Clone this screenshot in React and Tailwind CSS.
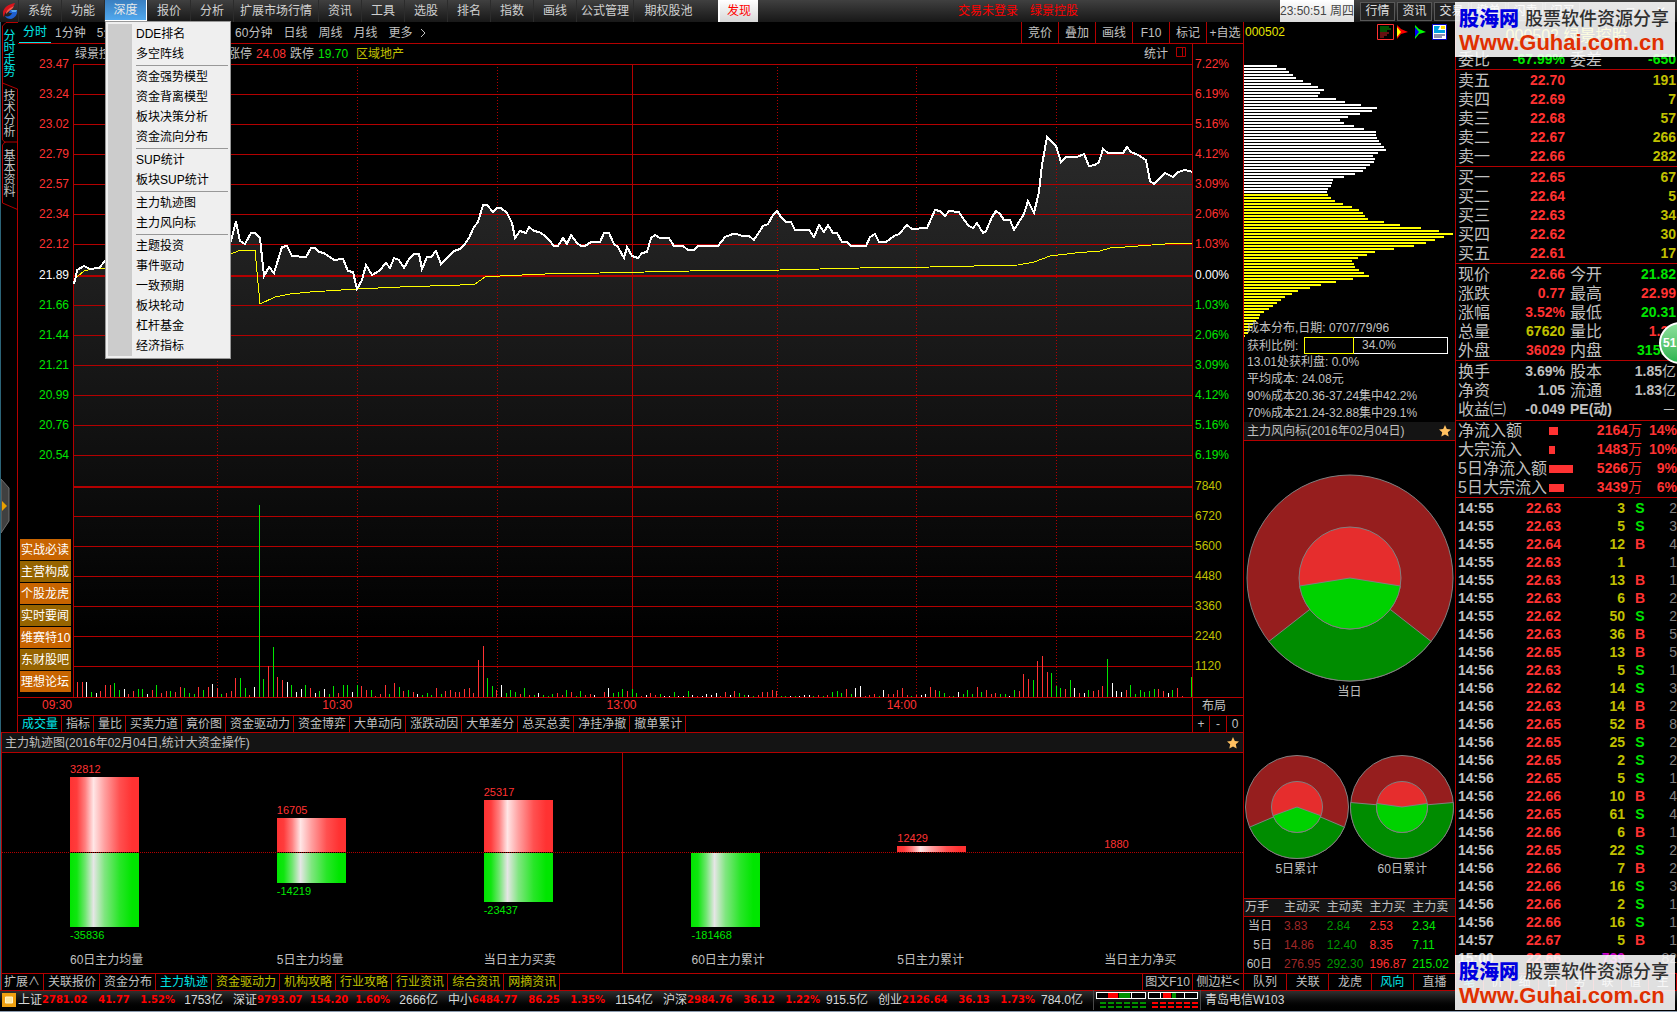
import { useState } from 'react'
import clsx from 'clsx'

const MENU = [
  ['系统', 'w-[43px]'],
  ['功能', 'w-[43px]'],
  ['深度', 'w-[43px]'],
  ['报价', 'w-[43px]'],
  ['分析', 'w-[43px]'],
  ['扩展市场行情', 'w-[85px]'],
  ['资讯', 'w-[43px]'],
  ['工具', 'w-[43px]'],
  ['选股', 'w-[43px]'],
  ['排名', 'w-[43px]'],
  ['指数', 'w-[43px]'],
  ['画线', 'w-[43px]'],
  ['公式管理', 'w-[57px]'],
  ['期权股池', 'w-[70px]'],
]

const DEPTH_MENU = [
  ['DDE排名', '多空阵线'],
  ['资金强势模型', '资金背离模型', '板块决策分析', '资金流向分布'],
  ['SUP统计', '板块SUP统计'],
  ['主力轨迹图', '主力风向标'],
  ['主题投资', '事件驱动', '一致预期', '板块轮动', '杠杆基金', '经济指标'],
]

const PERIODS = ['分时', '1分钟', '5分钟', '15分钟', '30分钟', '60分钟', '日线', '周线', '月线', '更多']
const TOOLS = ['竞价', '叠加', '画线', 'F10', '标记', '+自选']

const PRICES = ['23.47', '23.24', '23.02', '22.79', '22.57', '22.34', '22.12', '21.89', '21.66', '21.44', '21.21', '20.99', '20.76', '20.54']
const PERCENTS = ['7.22%', '6.19%', '5.16%', '4.12%', '3.09%', '2.06%', '1.03%', '0.00%', '1.03%', '2.06%', '3.09%', '4.12%', '5.16%', '6.19%']
const VOLUMES = ['7840', '6720', '5600', '4480', '3360', '2240', '1120']
const LINKS = ['实战必读', '主营构成', '个股龙虎', '实时要闻', '维赛特10', '东财股吧', '理想论坛']

const PRICE_LINE =
  '73,284 75,281 77,270 84,266 90,269 99,268 105,261 118,255 132,262 146,248 160,252 176,236 190,243 206,228 220,240 231,241 236,221 240,241 245,244 251,233 255,233 260,238 264,276 269,267 274,273 282,247 287,246 292,256 306,257 311,248 315,248 319,252 324,253 334,260 343,259 348,271 353,272 357,289 362,280 366,265 372,275 379,271 386,263 390,268 394,258 399,260 404,268 409,259 414,254 419,254 422,269 427,257 431,257 436,251 441,264 454,251 460,249 464,245 469,238 474,227 478,222 483,205 487,205 493,212 497,208 501,208 507,213 512,223 515,238 520,231 526,233 529,227 534,231 539,232 544,235 549,240 554,246 558,246 563,238 567,244 571,235 577,243 581,246 585,246 591,242 600,242 604,233 609,233 614,244 618,247 624,258 627,247 632,256 638,258 642,253 647,252 651,238 655,235 660,238 669,238 674,246 683,246 688,250 694,250 698,246 718,246 725,237 733,234 737,234 742,236 749,236 754,240 763,226 768,224 773,215 777,211 781,217 786,222 791,222 795,230 809,230 814,237 819,225 824,232 828,225 833,233 837,233 842,242 847,242 851,246 866,246 870,237 875,234 879,242 886,242 894,236 899,234 907,225 912,229 927,228 931,219 935,210 940,211 945,216 949,211 959,212 964,220 969,226 973,228 977,223 983,233 986,231 992,217 996,211 1000,214 1004,220 1010,220 1014,230 1024,214 1028,201 1034,213 1039,192 1042,165 1047,137 1056,146 1061,162 1066,157 1077,157 1084,154 1089,166 1095,165 1099,162 1103,149 1108,153 1123,153 1127,147 1131,152 1138,155 1146,160 1150,181 1154,184 1165,173 1173,177 1178,172 1185,170 1193,172'
const AVERAGE_LINE =
  '77,277 84,271 92,269 105,268 140,264 180,259 231,254 238,251 255,250 260,304 275,297 290,294 310,292 357,289 400,287 460,285 475,284 485,277 500,276 545,274 600,273 690,271 780,270 860,268 930,267 1018,265 1034,262 1050,256 1075,253 1100,251 1110,248 1125,247 1165,244 1193,243'

// one token per minute: colour letter + bar height, "." for no trades
const MINUTE_VOLUME = (
  'r15 r15 w15 g5 w4 r6 r12 r12 g14 g7 w8 r3 r6 g8 g8 w3 r7 g12 r4 r6 g6 r5 r10 g9 g4 g3 r10 g7 r10 w13 r9 g3 r4 r6 r19 g19 g9 r2 w10 g192 g18 r31 g50 r20 r17 w15 g12 w5 w8 g12 r9 w4 g6 w8 g3 g11 r4 g12 g12 w5 g12 r11 r7 g7 r1 r3 r12 g3 r14 g10 r6 g7 r5 w3 g2 g4 g2 r9 g3 r6 r7 r5 r5 r8 r9 r4 r37 r51 g19 g11 r7 w12 g4 g7 g5 r3 g9 r2 g2 w4 g2 g1 g3 r4 ' +
  'r2 g7 r5 g1 g6 r2 r3 w2 . r5 w9 g4 g5 g8 r6 g8 g4 r1 w2 r4 r2 g3 w1 w1 g5 w1 w1 g6 w2 r1 w1 w3 w2 w4 r1 r5 w2 r6 g4 g2 w2 g1 r2 r5 r5 r7 r6 g1 g1 w1 g1 w1 w2 w2 g1 r2 g1 r2 g5 g6 g4 r8 g3 w9 w11 r1 r2 r3 g1 w7 r3 r3 r7 r9 r2 g1 r2 w2 w3 r10 r7 g6 g4 r1 g1 w5 g3 g7 g3 r10 g5 r7 r3 r4 g3 g3 w1 g7 r6 r23 r18 g17 r36 r41 r25 g24 g11 g9 r8 g17 w9 r4 w4 g7 r6 r7 r11 g38 w14 ' +
  'w6 w5 r7 g12 g3 g7 g5 g6 g8 r8 r6 w4 g7 r9 r1 . g20'
).split(' ')
const VOLUME_COLORS = { r: '#ff3232', g: '#00e600', w: '#ffffff' }

const COST_ABOVE = [33, 42, 45, 49, 52, 59, 67, 74, 80, 76, 74, 92, 101, 117, 133, 128, 116, 104, 96, 100, 110, 120, 132, 132, 133, 135, 137, 140, 142, 134, 129, 131, 130, 126, 122, 119, 111, 100, 89, 88, 87, 84, 83]
const COST_BELOW = [84, 87, 91, 99, 108, 115, 119, 121, 124, 140, 156, 177, 195, 209, 200, 191, 182, 170, 150, 131, 123, 114, 108, 110, 111, 115, 120, 125, 109, 92, 77, 66, 54, 48, 41, 37, 33, 29, 25, 20, 16, 15, 12, 9, 8, 6, 4, 1]

const INDICATORS = ['成交量', '指标', '量比', '买卖力道', '竟价图', '资金驱动力', '资金博弈', '大单动向', '涨跌动因', '大单差分', '总买总卖', '净挂净撤', '撤单累计']

const FLOWS = [
  { name: '60日主力均量', up: 32812, upH: 75, down: -35836, downH: 74 },
  { name: '5日主力均量', up: 16705, upH: 34, down: -14219, downH: 30 },
  { name: '当日主力买卖', up: 25317, upH: 52, down: -23437, downH: 49 },
  { name: '60日主力累计', down: -181468, downH: 74 },
  { name: '5日主力累计', up: 12429, upH: 6 },
  { name: '当日主力净买', up: 1880, upH: 0 },
]

const BOTTOM_TABS = ['扩展∧', '关联报价', '资金分布', '主力轨迹', '资金驱动力', '机构攻略', '行业攻略', '行业资讯', '综合资讯', '网摘资讯']

const ASKS = [['卖五', '22.70', '191'], ['卖四', '22.69', '7'], ['卖三', '22.68', '57'], ['卖二', '22.67', '266'], ['卖一', '22.66', '282']]
const BIDS = [['买一', '22.65', '67'], ['买二', '22.64', '5'], ['买三', '22.63', '34'], ['买四', '22.62', '30'], ['买五', '22.61', '17']]

const R = 'text-[#ff3232]'
const G = 'text-[#00e600]'
const Y = 'text-[#c0c000]'
const W = 'text-[#c0c0c0]'

const QUOTES = [
  ['现价', '22.66', R, '今开', '21.82', G],
  ['涨跌', '0.77', R, '最高', '22.99', R],
  ['涨幅', '3.52%', R, '最低', '20.31', G],
  ['总量', '67620', Y, '量比', '1.25', R],
  ['外盘', '36029', R, '内盘', '31591', G],
]
const FUNDAMENTALS = [
  ['换手', '3.69%', W, '股本', '1.85亿', W],
  ['净资', '1.05', W, '流通', '1.83亿', W],
  ['收益㈢', '-0.049', W, 'PE(动)', '－', W],
]
const INFLOWS = [
  ['净流入额', 'w-[9px]', '2164万', '14%'],
  ['大宗流入', 'w-[6px]', '1483万', '10%'],
  ['5日净流入额', 'w-6', '5266万', '9%'],
  ['5日大宗流入', 'w-[15px]', '3439万', '6%'],
]

const TICKS = [
  ['14:55', '22.63', 3, 'S', 2],
  ['14:55', '22.63', 5, 'S', 3],
  ['14:55', '22.64', 12, 'B', 4],
  ['14:55', '22.63', 1, '', 1],
  ['14:55', '22.63', 13, 'B', 1],
  ['14:55', '22.63', 6, 'B', 2],
  ['14:55', '22.62', 50, 'S', 2],
  ['14:56', '22.63', 36, 'B', 5],
  ['14:56', '22.65', 13, 'B', 5],
  ['14:56', '22.63', 5, 'S', 1],
  ['14:56', '22.62', 14, 'S', 3],
  ['14:56', '22.63', 14, 'B', 2],
  ['14:56', '22.65', 52, 'B', 8],
  ['14:56', '22.65', 25, 'S', 2],
  ['14:56', '22.65', 2, 'S', 2],
  ['14:56', '22.65', 5, 'S', 1],
  ['14:56', '22.66', 10, 'B', 4],
  ['14:56', '22.65', 61, 'S', 4],
  ['14:56', '22.66', 6, 'B', 1],
  ['14:56', '22.65', 22, 'S', 2],
  ['14:56', '22.66', 7, 'B', 2],
  ['14:56', '22.66', 16, 'S', 3],
  ['14:56', '22.66', 2, 'S', 1],
  ['14:56', '22.66', 16, 'S', 1],
  ['14:57', '22.67', 5, 'B', 1],
  ['15:00', '22.66', 739, '', 82],
]

const INDEXES = [
  ['上证', '2781.02', '41.77', '1.52%', '1753亿'],
  ['深证', '9793.07', '154.20', '1.60%', '2666亿'],
  ['中小', '6484.77', '86.25', '1.35%', '1154亿'],
  ['沪深', '2984.76', '36.12', '1.22%', '915.5亿'],
  ['创业', '2126.64', '36.13', '1.73%', '784.0亿'],
]

function Logo() {
  return (
    <svg viewBox="0 0 16 18" className="h-[18px] w-4" aria-hidden="true">
      <path d="M13 1C7 2 2 5 1 10c0 2 0 4 1 5 0-3 2-6 5-8 2-1 5-2 6-6z" fill="#d8141c" />
      <path d="M12 4C8 6 4 8 4 12l2-2c2-2 5-3 6-6z" fill="#ff5a4a" />
      <path d="M8 8h7c1 4-2 8-6 9-3 0-5-1-6-3 3 1 6 0 7-3H7z" fill="#1f5fd0" />
      <path d="M9 8h6l-1 2h-4z" fill="#58a8f0" />
    </svg>
  )
}

function Star() {
  return (
    <svg viewBox="0 0 12 12" className="h-3 w-3" aria-hidden="true">
      <path d="M6 0l1.8 4 4.2.4-3.200 2.900.9 4.200L6 9.400 2.300 11.500l.9-4.200L0 4.400 4.200 4z" fill="#ffc060" />
    </svg>
  )
}

function TopBar({ open, setOpen }) {
  return (
    <header className="flex h-[22px] shrink-0 items-center bg-linear-to-b from-[#404040] to-[#181818] pl-px">
      <div className="flex w-[17px] justify-center">
        <Logo />
      </div>
      <nav className="flex h-full">
        {MENU.map(([name, width]) => {
          const active = open && name === '深度'
          return (
            <div key={name} className={clsx('relative flex h-full justify-center border-l border-[#2c2c2c]', width)}>
              <button
                type="button"
                onClick={() => name === '深度' && setOpen(!open)}
                className={clsx(
                  'h-[21px] px-2 whitespace-nowrap',
                  active ? 'border-r border-b border-white bg-linear-to-b from-[#3a7fc0] to-[#50a8ee] text-[#e8e8e8]' : 'text-[#d0d0d0]',
                )}
              >
                {name}
              </button>
              {active && <DepthMenu />}
            </div>
          )
        })}
      </nav>
      <button type="button" className="ml-[15px] h-[22px] w-10 border-l-2 border-white bg-linear-to-b from-white to-[#d8d8d8] text-[#ff0000]">
        发现
      </button>
      <div className="mr-[202px] ml-auto flex gap-3 text-[#ff0000]">
        <span>交易未登录</span>
        <span>绿景控股</span>
      </div>
      <time className="flex h-[22px] w-[74px] items-center justify-center self-start bg-linear-to-b from-white to-[#dcdcdc] whitespace-nowrap text-[#444]">
        23:50:51 周四
      </time>
      <div className="flex w-[323px] gap-0.5 pl-1.5">
        {['行情', '资讯', '交易', '撤单', '闪卖', '闪买'].map((name) => (
          <button key={name} type="button" className="h-[19px] w-[35px] border border-[#585858] bg-[#222] text-[#e0e0e0]">
            {name}
          </button>
        ))}
        <span className="flex flex-1 items-center justify-around text-white">
          <span>－</span>
          <span>□</span>
          <span>✕</span>
        </span>
      </div>
    </header>
  )
}

function DepthMenu() {
  return (
    <div
      role="menu"
      className="absolute top-[21px] left-0 z-20 w-[126px] border border-[#989898] bg-[#efefef] p-0.5 text-black"
    >
      <div className="border-l-[24px] border-[#cccccc]">
        {DEPTH_MENU.map((group, i) => (
          <div key={group[0]} className={clsx('ml-1', i > 0 && 'mt-px border-t border-[#989898] pt-px')}>
            {group.map((item) => (
              <button key={item} type="button" role="menuitem" className="block h-5 w-full text-left whitespace-nowrap">
                {item}
              </button>
            ))}
          </div>
        ))}
      </div>
    </div>
  )
}

function SideTabs() {
  return (
    <nav className="relative flex w-[18px] shrink-0 flex-col border-l border-[#2c6478]">
      <svg viewBox="0 0 17 710" className="absolute inset-0 h-[710px] w-[17px]" fill="none" stroke="#b40000" aria-hidden="true">
        <path d="M17 .5H5L1.500 4v57l15 6v53H4l-2.500 3V181l15 6.500M1.500 61v57l3 2.500M16.500 120v590" />
      </svg>
      {['分时走势', '技术分析', '基本资料'].map((name, i) => (
        <button
          key={name}
          type="button"
          className={clsx('relative flex h-[60px] flex-col items-center pt-2 leading-[12px]', i === 0 ? 'text-[#00e6e6]' : 'text-[#c0c0c0]')}
        >
          {name.split('').map((char) => (
            <span key={char} className="h-3">{char}</span>
          ))}
        </button>
      ))}
      <svg viewBox="0 0 10 56" className="absolute top-[456px] left-0 h-14 w-2.5" aria-hidden="true">
        <path d="M0 1l8 9v33l-8 12z" fill="#404040" stroke="#707070" />
        <path d="M1 23l5 5-5 5z" fill="#e8a000" />
      </svg>
    </nav>
  )
}

function PeriodBar() {
  return (
    <div className="flex h-[22px] items-stretch border-b border-[#b40000] text-[#c0c0c0]">
      <div className="flex gap-[11px] pl-px">
        {PERIODS.map((name, i) => (
          <button
            key={name}
            type="button"
            className={clsx('whitespace-nowrap', i === 0 && '-mr-[7px] border-b border-[#00e6e6] px-1 text-[#00e6e6]')}
          >
            {name}
          </button>
        ))}
        <svg viewBox="0 0 6 10" className="-ml-1 h-2.5 w-1.5 self-center" fill="none" stroke="#c0c0c0" aria-hidden="true">
          <path d="M1 1l4 4-4 4" />
        </svg>
      </div>
      <div className="ml-auto flex">
        {TOOLS.map((name) => (
          <button key={name} type="button" className="w-[37px] border-l border-[#b40000] whitespace-nowrap">
            {name}
          </button>
        ))}
      </div>
    </div>
  )
}

function MinuteChart() {
  const lines = [64, 94, 124, 154, 184, 214, 244, 305, 335, 365, 395, 425, 455, 516, 546, 576, 606, 636, 666]
  return (
    <svg viewBox="73 64 1119 633" preserveAspectRatio="none" className="block h-[633px] w-full" shapeRendering="crispEdges" role="img" aria-label="分时走势">
      <defs>
        <linearGradient id="area" gradientUnits="userSpaceOnUse" x1="0" y1="64" x2="0" y2="640">
          <stop offset="0" stopColor="#303030" />
          <stop offset="1" stopColor="#000000" />
        </linearGradient>
      </defs>
      <polygon points={`73,697 ${PRICE_LINE} 1193,697`} fill="url(#area)" />
      {lines.map((y) => (
        <rect key={y} x="73" y={y} width="1120" height="1" fill="#b40000" />
      ))}
      <rect x="73" y="275" width="1120" height="2" fill="#b40000" />
      <rect x="73" y="486" width="1120" height="2" fill="#b40000" />
      <rect x="73" y="64" width="1" height="633" fill="#b40000" />
      <rect x="632" y="64" width="1" height="633" fill="#b40000" />
      {[217, 357, 497, 777, 916, 1056].map((x) => (
        <line key={x} x1={x + 0.5} y1="67" x2={x + 0.5} y2="697" stroke="#b40000" strokeDasharray="1 2" />
      ))}
      {MINUTE_VOLUME.map((bar, i) =>
        bar === '.' ? null : (
          <rect
            key={i}
            x={Math.round(77 + (i * 1114) / (MINUTE_VOLUME.length - 1))}
            y={697 - Number(bar.slice(1))}
            width="1"
            height={bar.slice(1)}
            fill={VOLUME_COLORS[bar[0]]}
          />
        ),
      )}
      <polyline points={AVERAGE_LINE} fill="none" stroke="#ffff00" />
      <polyline points={PRICE_LINE} fill="none" stroke="#ffffff" strokeWidth="2" />
    </svg>
  )
}

function axisColor(i) {
  if (i === 7) return 'mt-px text-white'
  return i < 7 ? R : G
}

function ChartArea() {
  return (
    <div className="flex">
      <div className="flex w-[55px] shrink-0 flex-col pt-[5px]">
        {PRICES.map((price, i) => (
          <div key={price} className={clsx('flex h-[30px] items-center justify-end pr-1', axisColor(i))}>
            {price}
          </div>
        ))}
        <div className="mt-auto mb-[5px] flex flex-col gap-px px-0.5">
          {LINKS.map((name, i) => (
            <button
              key={name}
              type="button"
              className={clsx('h-[21px] pl-px text-left whitespace-nowrap text-white', i % 2 ? 'bg-[#966400]' : 'bg-[#c86400]')}
            >
              {name}
            </button>
          ))}
        </div>
      </div>
      <div className="min-w-0 flex-1">
        <div className="flex h-5 items-center pr-1 pl-0.5 text-[#c0c0c0]">
          <span className="w-[153px]">绿景控股</span>
          <span>涨停</span>
          <span className={clsx('ml-1', R)}>24.08</span>
          <span className="ml-1">跌停</span>
          <span className={clsx('ml-1', G)}>19.70</span>
          <span className={clsx('ml-2', Y)}>区域地产</span>
          <span className="ml-auto">统计</span>
          <svg viewBox="0 0 10 10" className="mr-0.5 mb-1 ml-2 h-2.5 w-2.5" fill="none" stroke="#b40000" aria-hidden="true">
            <path d="M.5.5h9v9h-9zM6.500.5v9" />
          </svg>
        </div>
        <MinuteChart />
      </div>
      <div className="w-[51px] shrink-0 border-l border-[#b40000] pt-[5px]">
        {PERCENTS.map((value, i) => (
          <div key={i} className={clsx('flex h-[30px] items-center pl-0.5', axisColor(i))}>
            {value}
          </div>
        ))}
        {VOLUMES.map((value, i) => (
          <div key={value} className={clsx('flex h-[30px] items-center pl-0.5', Y, i === 0 && 'mt-px')}>
            {value}
          </div>
        ))}
      </div>
    </div>
  )
}

function FlowPanel() {
  const red = 'bg-[linear-gradient(90deg,#ff3232_0%,#ff3c3c_10%,#ff8080_22%,#ffe6e6_34%,#ffa0a0_50%,#ff5050_72%,#ff3232_90%)]'
  const green = 'bg-[linear-gradient(90deg,#00e600_0%,#10e610_10%,#70e670_22%,#e6e6e6_34%,#80e680_50%,#28e628_72%,#00e600_90%)]'
  return (
    <div className="grid h-[221px] grid-cols-6 border-t border-[#b40000]">
      {FLOWS.map((flow, i) => (
        <div key={flow.name} className={clsx('text-[11px]', i === 3 && 'border-l border-[#b40000]')}>
          <div className="flex h-[100px] flex-col justify-end border-b border-dotted border-[#b40000] pl-[68px]">
            {flow.up && <span className="flex h-4 items-center text-[#ff3232]">{flow.up}</span>}
            <div className={clsx('w-[69px]', red)} style={{ height: flow.upH || 0 }} />
          </div>
          <div className="h-[99px] pl-[68px]">
            <div className={clsx('w-[69px]', green)} style={{ height: flow.downH || 0 }} />
            {flow.down && <span className="flex h-4 items-center text-[#00e600]">{flow.down}</span>}
          </div>
          <div className="flex h-4 items-center pl-[68px] text-xs text-[#c0c0c0]">{flow.name}</div>
        </div>
      ))}
    </div>
  )
}

function LeftPanel() {
  return (
    <section className="flex min-w-0 flex-1 flex-col">
      <div className="flex">
        <SideTabs />
        <div className="min-w-0 flex-1">
          <PeriodBar />
          <ChartArea />
          <div className="flex h-[18px] border-t border-[#b40000] leading-[15px] text-[#ff3232]">
            <div className="grid min-w-0 flex-1 grid-cols-[54px_280fr_284fr_280fr_275fr] text-right">
              <span>09:30</span>
              <span>10:30</span>
              <span>13:00</span>
              <span>14:00</span>
            </div>
            <button type="button" className="w-[51px] border-l border-[#b40000] pr-2 text-[#c0c0c0]">
              布局
            </button>
          </div>
          <div className="flex h-[17px] border-t border-[#b40000] text-[#c0c0c0]">
            {INDICATORS.map((name, i) => (
              <button
                key={name}
                type="button"
                className={clsx('border-r border-[#b40000] pr-[3px] pl-1 leading-[15px] whitespace-nowrap', i === 0 && 'text-[#00e6e6]')}
              >
                {name}
              </button>
            ))}
            <div className="ml-auto grid w-[51px] grid-cols-3">
              {['+', '-', '0'].map((name) => (
                <button key={name} type="button" className="border-l border-[#b40000] leading-[15px]">
                  {name}
                </button>
              ))}
            </div>
          </div>
        </div>
      </div>
      <div className="border-l border-[#2c6478]">
        <div className="border-l border-[#b40000]">
          <div className="flex h-5 items-center justify-between border-t border-[#b40000] bg-[#141414] pr-1 pl-[3px] text-[#c0c0c0]">
            <h2>主力轨迹图(2016年02月04日,统计大资金操作)</h2>
            <Star />
          </div>
          <FlowPanel />
          <div className="flex h-[17px] border-t border-[#b40000] text-[#c0c0c0]">
            {BOTTOM_TABS.map((name, i) => (
              <button
                key={name}
                type="button"
                className={clsx(
                  'border-r border-[#b40000] px-[3px] leading-[16px] whitespace-nowrap first:pl-0.5',
                  i === 3 && 'text-[#00e6e6]',
                  i > 3 && 'text-[#c0c000]',
                  i > 0 && 'pl-1',
                )}
              >
                {name}
              </button>
            ))}
            <button type="button" className="ml-auto w-[50px] border-l border-[#b40000] leading-[16px] whitespace-nowrap">
              图文F10
            </button>
            <button type="button" className="w-[51px] border-l border-[#b40000] leading-[16px] whitespace-nowrap">
              侧边栏&lt;
            </button>
          </div>
        </div>
      </div>
    </section>
  )
}

// slice below two rays that leave the centre at `angle` degrees under the horizontal
function slice(radius, angle) {
  const rad = (angle * Math.PI) / 180
  const dx = radius * Math.cos(rad)
  const dy = radius * Math.sin(rad)
  return `M0 0L${dx} ${dy}A${radius} ${radius} 0 ${angle < 0 ? 1 : 0} 1 ${-dx} ${dy}Z`
}

function Donut({ outer, inner, name, big }) {
  return (
    <figure className="flex flex-col items-center">
      <svg
        viewBox="-104 -104 208 208"
        className={big ? 'h-[208px] w-[208px]' : 'h-[104px] w-[104px]'}
        stroke="#808080"
        strokeWidth={big ? 1 : 2}
        aria-hidden="true"
      >
        <circle r="103" fill="#961e1e" />
        <path d={slice(103, outer)} fill="#008c00" />
        <circle r="51" fill="#e62d2d" />
        <path d={slice(51, inner)} fill="#00d200" />
      </svg>
      <figcaption className="flex h-5 items-center text-[#c0c0c0]">{name}</figcaption>
    </figure>
  )
}

function CostChart() {
  return (
    <svg viewBox="0 0 211 275" className="mt-[22px] block h-[275px] w-[211px]" shapeRendering="crispEdges" aria-hidden="true">
      {COST_ABOVE.map((w, i) => (
        <rect key={i} x="0" y={1 + i * 3} width={w} height="2" fill="#ffffff" />
      ))}
      {COST_BELOW.map((w, i) => (
        <rect key={i} x="0" y={130 + i * 3} width={w} height="2" fill="#ffff00" />
      ))}
    </svg>
  )
}

const WIND_ROWS = [
  ['当日', '3.83', '2.84', '2.53', '2.34'],
  ['5日', '14.86', '12.40', '8.35', '7.11'],
  ['60日', '276.95', '292.30', '196.87', '215.02'],
]
const WIND_COLORS = ['text-[#a02828]', 'text-[#009600]', 'text-[#ff3232]', 'text-[#00e600]']

function MiddlePanel() {
  return (
    <section className="flex w-[212px] shrink-0 flex-col border-l border-[#b40000] text-[#c0c0c0]">
      <div className="flex h-5 items-center pl-px">
        <span className="text-[#e6e600]">000502</span>
        <svg viewBox="0 0 70 18" className="ml-auto mr-2 h-[18px] w-[70px]" aria-hidden="true">
          <path d="M.5 1.500h16v15h-16z" fill="#000" stroke="#ff3232" />
          <path d="M3 4h9M3 6h11M3 8h7" stroke="#00a000" />
          <path d="M3 10h9M3 12h7M3 14h4" stroke="#c82020" />
          <path d="M20 2l4 4 7 3-7 2-4 5z" fill="#ff0000" />
          <path d="M20 4l4 5-4 5z" fill="#ffff00" />
          <path d="M38 2l4 4 7 3-7 2-4 5z" fill="#00ff00" />
          <path d="M38 4l4 5-4 5z" fill="#0000ff" />
          <path d="M55.500 1.500h14v15h-14z" fill="#fff" stroke="#0000c0" />
          <path d="M57 3h6l-2 4h7v3H57z" fill="#00a0e0" />
          <path d="M64 3h4v3h-4z" fill="#ffe000" />
          <path d="M57 12h11M57 14h8" stroke="#202060" />
        </svg>
      </div>
      <CostChart />
      <div className="relative -mt-[19px] pl-[3px] whitespace-nowrap">
        <p className="h-[17px] leading-[17px]">成本分布,日期: 0707/79/96</p>
        <div className="flex h-[17px] items-center">
          <span className="w-[57px]">获利比例:</span>
          <div className="flex h-[17px] w-36 border border-white">
            <span className="-m-px w-[50px] border border-[#ffff00]" />
            <span className="pl-[9px] leading-[15px]">34.0%</span>
          </div>
        </div>
        <p className="h-[17px] leading-[17px]">13.01处获利盘: 0.0%</p>
        <p className="h-[17px] leading-[17px]">平均成本: 24.08元</p>
        <p className="h-[17px] leading-[17px]">90%成本20.36-37.24集中42.2%</p>
        <p className="h-[17px] leading-[17px]">70%成本21.24-32.88集中29.1%</p>
      </div>
      <div className="flex h-[18px] items-center justify-between bg-[#141414] pr-1 pl-[3px]">
        <h2>主力风向标(2016年02月04日)</h2>
        <Star />
      </div>
      <div className="flex-1 border-t border-[#b40000] pt-[33px]">
        <Donut outer={38} inner={9} name="当日" big />
        <div className="mt-[53px] grid grid-cols-2">
          <Donut outer={23} inner={20} name="5日累计" />
          <Donut outer={-5} inner={-8} name="60日累计" />
        </div>
      </div>
      <table className="w-full table-fixed border-t border-[#b40000] text-left">
        <thead>
          <tr className="h-[18px] border-b border-[#b40000] bg-[#141414]">
            <th className="w-10 pl-px font-normal">万手</th>
            <th className="font-normal">主动买</th>
            <th className="font-normal">主动卖</th>
            <th className="font-normal">主力买</th>
            <th className="font-normal">主力卖</th>
          </tr>
        </thead>
        <tbody>
          {WIND_ROWS.map(([name, ...values]) => (
            <tr key={name} className="h-[19px]">
              <td className="pr-3 text-right whitespace-nowrap">{name}</td>
              {values.map((value, i) => (
                <td key={value} className={WIND_COLORS[i]}>{value}</td>
              ))}
            </tr>
          ))}
        </tbody>
      </table>
      <div className="grid h-[17px] grid-cols-5 border-t border-[#b40000]">
        {['队列', '关联', '龙虎', '风向', '直播'].map((name, i) => (
          <button
            key={name}
            type="button"
            className={clsx('leading-[16px]', i > 0 && 'border-l border-[#b40000]', name === '风向' && 'text-[#00e6e6]')}
          >
            {name}
          </button>
        ))}
      </div>
    </section>
  )
}

function Num({ children, className }) {
  const unit = /[万亿－]$/.test(children) ? children.slice(-1) : ''
  const digits = unit ? children.slice(0, -1) : children
  return (
    <span className={clsx('text-right text-sm leading-[19px] font-bold whitespace-nowrap', className)}>
      {digits}
      {unit && <span className="font-normal">{unit}</span>}
    </span>
  )
}

function BookRows({ rows }) {
  return (
    <div className="border-t border-[#b40000] pt-px pr-px pl-0.5">
      {rows.map(([name, price, size]) => (
        <div key={name} className="grid h-[19px] grid-cols-[40px_67px_1fr] leading-[19px]">
          <span>{name}</span>
          <Num className={R}>{price}</Num>
          <Num className={Y}>{size}</Num>
        </div>
      ))}
    </div>
  )
}

function QuoteRows({ rows, className }) {
  return (
    <div className={clsx('border-t border-[#b40000] pt-px pr-px pl-0.5', className)}>
      {rows.map(([a, av, ac, b, bv, bc]) => (
        <div key={a} className="grid h-[19px] grid-cols-[40px_67px_42px_1fr] leading-[19px] whitespace-nowrap">
          <span>{a}</span>
          <Num className={ac}>{av}</Num>
          <span className={clsx('pl-[5px]', b === 'PE(动)' && 'text-sm leading-[19px] font-bold')}>{b}</span>
          <Num className={bc}>{bv}</Num>
        </div>
      ))}
    </div>
  )
}

function Watermark({ className }) {
  return (
    <div className={clsx('absolute right-0.5 z-10 h-[55px] w-[220px] overflow-hidden bg-white/88 pl-1', className)}>
      <div className="flex h-[30px] items-center gap-1.5 pt-1 whitespace-nowrap">
        <span className="text-[20px] leading-[26px] font-black text-[#0000e0]">股海网</span>
        <span className="text-[18px] leading-[24px] font-medium text-[#303030]">股票软件资源分享</span>
      </div>
      <div className="text-[22px] leading-[22px] font-black text-[#e03000]">Www.Guhai.com.cn</div>
    </div>
  )
}

function RightPanel() {
  return (
    <section className="relative flex w-[222px] shrink-0 flex-col border-l border-[#b40000] text-base text-[#c0c0c0]">
      <h1 className="flex h-7 items-center justify-center text-[#e6e600]">000502 绿景控股</h1>
      <div className="grid h-[19px] grid-cols-[40px_67px_42px_1fr] pr-px pl-0.5 leading-[19px]">
        <span>委比</span>
        <Num className={G}>-67.99%</Num>
        <span className="pl-[5px]">委差</span>
        <Num className={G}>-650</Num>
      </div>
      <BookRows rows={ASKS} />
      <BookRows rows={BIDS} />
      <QuoteRows rows={QUOTES} />
      <QuoteRows rows={FUNDAMENTALS} className="pb-px" />
      <div className="border-t border-[#b40000] pl-0.5">
        {INFLOWS.map(([name, width, value, percent]) => (
          <div key={name} className="flex h-[19px] items-center leading-[19px] whitespace-nowrap text-[#ff3232]">
            <span className="w-[91px] text-[#c0c0c0]">{name}</span>
            <span className="w-6">
              <span className={clsx('block h-2 bg-[#ff3232]', width)} />
            </span>
            <Num className="w-[69px]">{value}</Num>
            <Num className="flex-1">{percent}</Num>
          </div>
        ))}
      </div>
      <div className="border-t border-[#b40000] pt-px pl-0.5">
        <table className="w-full table-fixed text-sm leading-[18px] font-bold">
          <tbody>
            {TICKS.map(([time, price, size, side, count], i) => (
              <tr key={i} className="h-[18px]">
                <td className="w-[60px]">{time}</td>
                <td className="w-[43px] text-right text-[#ff3232]">{price}</td>
                <td className={clsx('w-[64px] text-right', size > 500 ? 'text-[#c800c8]' : Y)}>{size}</td>
                <td className={clsx('w-[30px] text-center', side === 'S' ? G : R)}>{side}</td>
                <td className="text-right font-normal text-[#808080]">{count}</td>
              </tr>
            ))}
          </tbody>
        </table>
      </div>
      <div className="mt-auto grid h-[17px] grid-cols-8 border-t border-[#b40000] text-xs">
        {['笔', '价', '细', '日', '势', '联', '值', '主'].map((name, i) => (
          <button key={name} type="button" className={clsx('border-r border-[#b40000] leading-[16px]', i === 0 && 'text-[#00e6e6]')}>
            {name}
          </button>
        ))}
      </div>
      <div className="absolute top-[300px] -right-6 flex h-[42px] w-[42px] items-center rounded-full border-2 border-white bg-linear-to-b from-[#8ce09c] to-[#28b450] pl-0.5 text-xs font-bold text-white">
        51
      </div>
    </section>
  )
}

function StatusBar() {
  return (
    <footer className="flex h-[21px] shrink-0 items-center border-t border-[#b40000] bg-linear-to-b from-[#303030] to-[#000] pb-0.5 whitespace-nowrap text-[#d8d8d8]">
      <div className="flex w-[18px] justify-center">
        <svg viewBox="0 0 14 14" className="h-3.5 w-3.5" aria-hidden="true">
          <path d="M0 0h14v14H0z" fill="#f0a010" />
          <path d="M3.500 4h7v6h-7z" fill="#ffe8a0" stroke="#fff4d0" />
        </svg>
      </div>
      {INDEXES.map(([name, value, change, percent, amount]) => (
        <div key={name} className="flex w-[215px] items-center">
          <span className="w-6">{name}</span>
          <span className="flex font-['DejaVu_Sans'] text-[10px] font-bold text-[#ff0000]">
            <span className="w-[47px]">{value}</span>
            <span className="w-[50px] text-center">{change}</span>
            <span className="w-9 text-right">{percent}</span>
          </span>
          <span className="w-12 text-right">{amount}</span>
        </div>
      ))}
      <svg viewBox="0 0 108 20" className="h-5 w-[108px]" shapeRendering="crispEdges" aria-hidden="true">
        <path d="M0 0h1v20h-1zM107 0h1v20h-1z" fill="#484848" />
        <path d="M3.500 2.500h49v6h-49zM55.500 2.500h49v6h-49z" fill="#000" stroke="#fff" />
        <path d="M15 3h10v5h-10zM70 3h8v5h-8z" fill="#ff0000" />
        <path d="M26 3h11v5h-11zM79 3h4v5h-4z" fill="#009000" />
        <path d="M38 2h1v7h-1zM67 2h1v7h-1zM91 2h1v7h-1z" fill="#fff" />
        <path d="M7 12.500h46M7 16.500h46" stroke="#009000" strokeWidth="2" strokeDasharray="6 2" />
        <path d="M59 12.500h46M59 16.500h46" stroke="#ff0000" strokeWidth="2" strokeDasharray="6 2" />
      </svg>
      <span className="pl-1">青岛电信W103</span>
    </footer>
  )
}

export default function App() {
  const [open, setOpen] = useState(true)

  return (
    <div className="relative flex min-h-screen flex-col overflow-hidden bg-black font-['Liberation_Sans','Noto_Sans_CJK_SC',sans-serif] text-xs">
      <TopBar open={open} setOpen={setOpen} />
      <main className="flex flex-1">
        <LeftPanel />
        <MiddlePanel />
        <RightPanel />
      </main>
      <StatusBar />
      <div className="h-px bg-[#8c9cb0]" />
      <Watermark className="top-0.5" />
      <Watermark className="bottom-0.5" />
    </div>
  )
}
